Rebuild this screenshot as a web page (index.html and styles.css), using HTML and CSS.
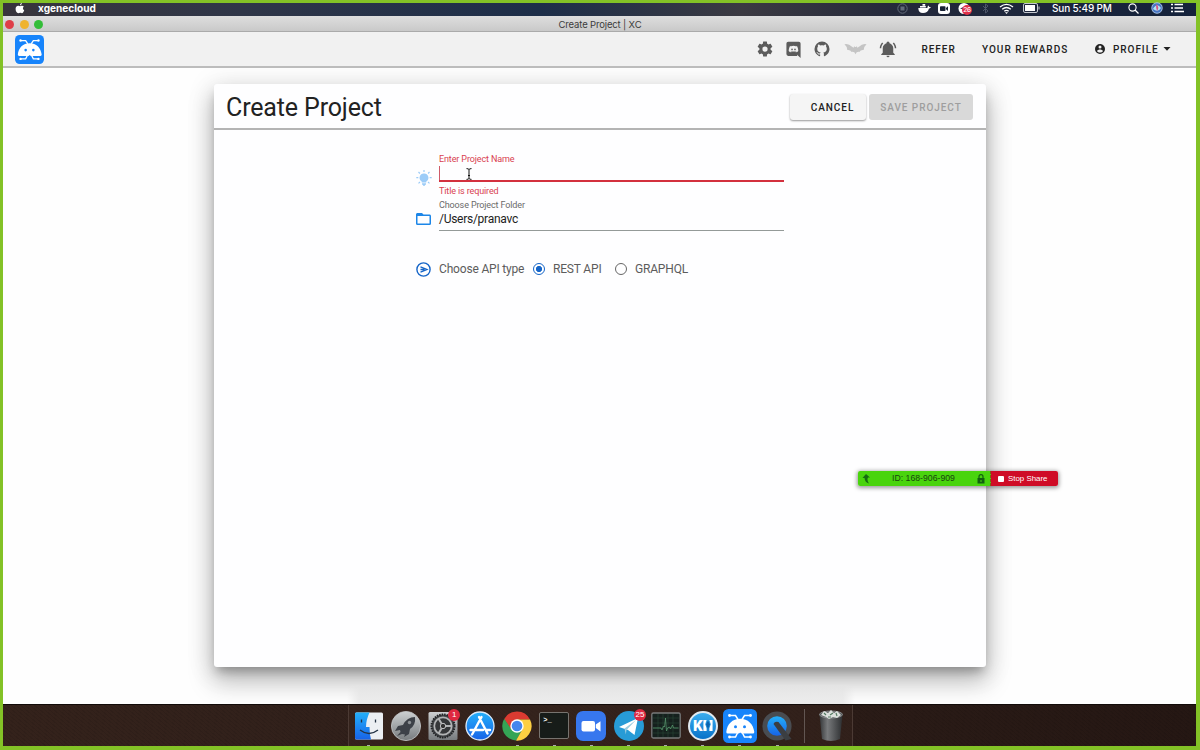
FILE: index.html
```html
<!DOCTYPE html>
<html lang="en">
<head>
<meta charset="utf-8">
<title>Create Project | XC</title>
<link rel="stylesheet" href="styles.css">
</head>
<body>
<svg class="defs" aria-hidden="true">
  <defs>
    <linearGradient id="blue" x2="0" y2="1"><stop stop-color="#24b0fa"/><stop offset="1" stop-color="#1763e8"/></linearGradient>
    <linearGradient id="silver" x2="0" y2="1"><stop stop-color="#cdd0d2"/><stop offset="1" stop-color="#777b7e"/></linearGradient>
    <linearGradient id="metal" x2="1" y2="0"><stop stop-color="#343638"/><stop offset=".35" stop-color="#77797b"/><stop offset="1" stop-color="#2d2f31"/></linearGradient>
    <symbol id="bug" viewBox="0 0 34 34">
      <rect width="34" height="34" rx="5.500" fill="#1784fb"/>
      <g fill="none" stroke="#fff" stroke-width="1.500"><path d="M7 6.500h5.500l2.500 4M27 6.500h-5.500l-2.500 4M6.500 28h6l2-4M27.500 28h-6l-2-4"/></g>
      <g fill="#fff"><circle cx="6.500" cy="6.500" r="1.400"/><circle cx="27.500" cy="6.500" r="1.400"/><circle cx="6.500" cy="28" r="1.400"/><circle cx="27.500" cy="28" r="1.400"/>
      <path d="M3.300 23C4 15 9.500 9.700 17.200 9.700S30.400 15 31.300 23q0 1.500-1.500 1.500H18.500l-1.300-1-1.300 1H4.800q-1.500 0-1.500-1.500z"/></g>
      <circle cx="12.500" cy="17.700" r="1.500" fill="#1784fb"/><circle cx="21.500" cy="17.700" r="1.500" fill="#1784fb"/>
    </symbol>
  </defs>
</svg>
<div class="screen">
  <header class="menubar">
    <svg class="apple" viewBox="0 0 10 11"><path fill="#fff" d="M6.900.1C7 1.200 6.100 2.300 5 2.400 4.900 1.300 5.900.2 6.900.1zM8.800 3.600C7.500 4.600 7.700 6.500 9.200 7.200 8.800 8.700 7.800 10.200 6.900 10.200 6.200 10.200 5.900 9.800 5.100 9.800s-1.100.4-1.800.4C1.700 10.200.4 7.800.6 5.600.8 3.500 2.200 2.600 3.500 2.800c.6.100 1 .4 1.600.4.700 0 1-.4 1.900-.4.700 0 1.400.3 1.800.8z"/></svg>
    <span class="app-name">xgenecloud</span>
    <div class="status">
      <svg class="s-rec" viewBox="0 0 11 11"><circle cx="5.500" cy="5.500" r="4.700" fill="none" stroke="#626b7a"/><rect x="3.500" y="3.500" width="4" height="4" fill="#626b7a"/></svg>
      <svg class="s-docker" viewBox="0 0 13 11"><path fill="#fff" d="M.3 5h8.400c1.200 0 1.100-1 1-1.700l.8-.7.8 1.300 1.700.2-1.400 1.300H11C10 8.800 8 10 5 10 1.700 10 .4 8.200.3 5zM2 2.900h5.800v1.700H2zM4.500 1h2.700v1.700H4.500z"/></svg>
      <svg class="s-zoom" viewBox="0 0 12 11"><rect width="12" height="11" rx="3" fill="#fff"/><rect x="2" y="3.200" width="5.500" height="4.800" rx=".8" fill="#172033"/><path fill="#172033" d="M8 5l2-1.700V8L8 6.300z"/></svg>
      <span class="s-msg"><svg viewBox="0 0 12 11"><circle cx="6" cy="5.500" r="5.500" fill="#fff"/><path d="M2 5.500l7-3-1.500 6-2-2z" fill="#26324a"/></svg><b>26</b></span>
      <svg class="s-bt" viewBox="0 0 7 11"><path d="M1 3l5 5-2.500 2V1L6 3 1 8" fill="none" stroke="#4d5668"/></svg>
      <svg class="s-wifi" viewBox="0 0 15 11"><g fill="none" stroke="#fff" stroke-width="1.400"><path d="M1 4q6.500-5.300 13 0M3.200 6.300q4.300-3.500 8.600 0M5.300 8.300q2.200-1.800 4.400 0"/></g><path fill="#fff" d="M6 9.200h3l-1.500 1.700z"/></svg>
      <svg class="s-batt" viewBox="0 0 17 10"><rect x=".5" y=".5" width="14" height="9" rx="1.500" fill="none" stroke="#c4c8cf"/><rect x="2" y="2" width="10" height="6" fill="#fff"/><path d="M16 3.500v3" stroke="#c4c8cf"/></svg>
      <time class="clock">Sun 5:49 PM</time>
      <svg class="s-search" viewBox="0 0 11 11"><circle cx="4.500" cy="4.500" r="3.600" fill="none" stroke="#fff" stroke-width="1.100"/><path d="M7 7l3.500 3.500" stroke="#fff" stroke-width="1.300"/></svg>
      <svg class="s-siri" viewBox="0 0 12 12"><circle cx="6" cy="6" r="5.700" fill="#a8c5e8"/><circle cx="6" cy="6" r="4.800" fill="#4674c2"/><path d="M2 7q4-7 8-1-3 5-8 1z" fill="#b5e5f4"/><path d="M5 2q4 3 1 7-1-3-1-7z" fill="#d95385"/></svg>
      <svg class="s-list" viewBox="0 0 13 10"><path d="M0 1.500h2M3.500 1.500H12M0 5h2M3.500 5H12M0 8.500h2M3.500 8.500H13" stroke="#fff" stroke-width="1.400"/></svg>
    </div>
  </header>
  <div class="titlebar"><i class="light red"></i><i class="light amber"></i><i class="light green"></i><span>Create Project | XC</span></div>
  <nav class="toolbar">
    <svg class="logo"><use href="#bug"/></svg>
    <div class="tools">
      <svg class="t-cog" viewBox="0 0 24 24"><path d="M12,15.5A3.5,3.5 0 0,1 8.5,12A3.5,3.5 0 0,1 12,8.5A3.5,3.5 0 0,1 15.5,12A3.5,3.5 0 0,1 12,15.5M19.43,12.97C19.47,12.65 19.5,12.33 19.5,12C19.5,11.67 19.47,11.34 19.43,11L21.54,9.37C21.73,9.22 21.78,8.95 21.66,8.73L19.66,5.27C19.54,5.05 19.27,4.96 19.05,5.05L16.56,6.05C16.04,5.66 15.5,5.32 14.87,5.07L14.5,2.42C14.46,2.18 14.25,2 14,2H10C9.75,2 9.54,2.18 9.5,2.42L9.13,5.07C8.5,5.32 7.96,5.66 7.44,6.05L4.95,5.05C4.73,4.96 4.46,5.05 4.34,5.27L2.34,8.73C2.21,8.95 2.27,9.22 2.46,9.37L4.57,11C4.53,11.34 4.5,11.67 4.5,12C4.5,12.33 4.53,12.65 4.57,12.97L2.46,14.63C2.27,14.78 2.21,15.05 2.34,15.27L4.34,18.73C4.46,18.95 4.73,19.03 4.95,18.95L7.44,17.94C7.96,18.34 8.5,18.68 9.13,18.93L9.5,21.58C9.54,21.82 9.75,22 10,22H14C14.25,22 14.46,21.82 14.5,21.58L14.87,18.93C15.5,18.67 16.04,18.34 16.56,17.94L19.05,18.95C19.27,19.03 19.54,18.95 19.66,18.73L21.66,15.27C21.78,15.05 21.73,14.78 21.54,14.63L19.43,12.97Z"/></svg>
      <svg class="t-discord" viewBox="0 0 24 24"><path d="M22,24L16.75,19L17.38,21H4.5A2.5,2.5 0 0,1 2,18.5V3.5A2.5,2.5 0 0,1 4.5,1H19.5A2.5,2.5 0 0,1 22,3.5V24M12,6.8C9.32,6.8 7.44,7.95 7.44,7.95C8.47,7.03 10.27,6.5 10.27,6.5L10.1,6.33C8.41,6.36 6.88,7.53 6.88,7.53C5.16,11.12 5.27,14.22 5.27,14.22C6.67,16.03 8.75,15.9 8.75,15.9L9.46,15C8.21,14.73 7.42,13.62 7.42,13.62C7.42,13.62 9.3,14.9 12,14.9C14.7,14.9 16.58,13.62 16.58,13.62C16.58,13.62 15.79,14.73 14.54,15L15.25,15.9C15.25,15.9 17.33,16.03 18.73,14.22C18.73,14.22 18.84,11.12 17.12,7.53C17.12,7.53 15.59,6.36 13.9,6.33L13.73,6.5C13.73,6.5 15.53,7.03 16.56,7.95C16.56,7.95 14.68,6.8 12,6.8M9.93,10.59C10.58,10.59 11.11,11.16 11.1,11.86C11.1,12.55 10.58,13.13 9.93,13.13C9.29,13.13 8.77,12.55 8.77,11.86C8.77,11.16 9.28,10.59 9.93,10.59M14.1,10.59C14.75,10.59 15.27,11.16 15.27,11.86C15.27,12.55 14.75,13.13 14.1,13.13C13.46,13.13 12.94,12.55 12.94,11.86C12.94,11.16 13.45,10.59 14.1,10.59Z"/></svg>
      <svg class="t-github" viewBox="0 0 24 24"><path d="M12,2A10,10 0 0,0 2,12C2,16.42 4.87,20.17 8.84,21.5C9.34,21.58 9.5,21.27 9.5,21C9.5,20.77 9.5,20.14 9.5,19.31C6.73,19.91 6.14,17.97 6.14,17.97C5.68,16.81 5.03,16.5 5.03,16.5C4.12,15.88 5.1,15.9 5.1,15.9C6.1,15.97 6.63,16.93 6.63,16.93C7.5,18.45 8.97,18 9.54,17.76C9.63,17.11 9.89,16.67 10.17,16.42C7.95,16.17 5.62,15.31 5.62,11.5C5.62,10.39 6,9.5 6.65,8.79C6.55,8.54 6.2,7.5 6.75,6.15C6.75,6.15 7.59,5.88 9.5,7.17C10.29,6.95 11.15,6.84 12,6.84C12.85,6.84 13.71,6.95 14.5,7.17C16.41,5.88 17.25,6.15 17.25,6.15C17.8,7.5 17.45,8.54 17.35,8.79C18,9.5 18.38,10.39 18.38,11.5C18.38,15.32 16.04,16.16 13.81,16.41C14.17,16.72 14.5,17.33 14.5,18.26C14.5,19.6 14.5,20.68 14.5,21C14.5,21.27 14.66,21.59 15.17,21.5C19.14,20.16 22,16.42 22,12A10,10 0 0,0 12,2Z"/></svg>
      <svg class="t-bat" viewBox="0 0 24 12"><path d="M.5 1Q5 0 8 3.500l2 1.300.6-1.800 1 1h.8l1-1 .6 1.800 2-1.300Q19 0 23.500 1 21 3 20.500 7q-3-.5-4.500 2-3-.5-4 2.500-1-3-4-2.500-1.500-2.500-4.500-2Q3 3 .5 1z"/></svg>
      <svg class="t-bell" viewBox="0 0 24 24"><path d="M21,19V20H3V19L5,17V11C5,7.9 7.03,5.17 10,4.29C10,4.19 10,4.1 10,4A2,2 0 0,1 12,2A2,2 0 0,1 14,4C14,4.1 14,4.19 14,4.29C16.97,5.17 19,7.9 19,11V17L21,19M14,21A2,2 0 0,1 12,23A2,2 0 0,1 10,21M19.75,3.19L18.33,4.61C20.04,6.3 21,8.6 21,11H23C23,8.07 21.84,5.25 19.75,3.19M1,11H3C3,8.6 3.96,6.3 5.67,4.61L4.25,3.19C2.16,5.25 1,8.07 1,11Z"/></svg>
      <span class="n-refer">REFER</span>
      <span class="n-rewards">YOUR REWARDS</span>
      <svg class="n-acct" viewBox="2 2 20 20"><path d="M12,19.2C9.5,19.2 7.29,17.92 6,16C6.03,14 10,12.9 12,12.9C14,12.9 17.97,14 18,16C16.71,17.92 14.5,19.2 12,19.2M12,5A3,3 0 0,1 15,8A3,3 0 0,1 12,11A3,3 0 0,1 9,8A3,3 0 0,1 12,5M12,2A10,10 0 0,0 2,12A10,10 0 0,0 12,22A10,10 0 0,0 22,12C22,6.47 17.5,2 12,2Z"/></svg>
      <span class="n-profile">PROFILE</span>
      <svg class="n-arrow" viewBox="0 0 8 4"><path d="M.5 0h7L4 3.700z"/></svg>
    </div>
  </nav>
  <main class="page">
    <section class="card">
      <div class="card-head">
        <h1>Create Project</h1>
        <button class="btn cancel">CANCEL</button>
        <button class="btn save" disabled>SAVE PROJECT</button>
      </div>
      <form class="form">
        <div class="row name-row">
          <svg class="bulb" viewBox="0 0 16 16"><path d="M8 3.500a4.300 4.300 0 0 1 2.300 8v1H5.700v-1A4.300 4.300 0 0 1 8 3.500zM6 13.300h4v1.500H9v1H7v-1H6z"/><path d="M8 0v2M2.500 2l1.400 1.500M13.500 2l-1.400 1.500M.3 7.700h2M13.700 7.700h2M2.500 13.400L4 12M13.500 13.400L12 12" stroke="#9cccf8" stroke-width="1.200"/></svg>
          <div class="field">
            <label class="error">Enter Project Name</label>
            <div class="input invalid"><i class="caret"></i><svg class="ibeam" viewBox="0 0 6 12"><path d="M.5.6q2 0 2.500 1Q3.500.6 5.500.6M3 1.500v9M.5 11.400q2 0 2.500-1 .5 1 2.500 1M2 7.500h2" fill="none" stroke="#111"/></svg></div>
            <div class="hint error">Title is required</div>
          </div>
        </div>
        <div class="row folder-row">
          <svg class="folder" viewBox="2 4 20 16"><path d="M20,18H4V8H20M20,6H12L10,4H4C2.89,4 2,4.89 2,6V18A2,2 0 0,0 4,20H20A2,2 0 0,0 22,18V8C22,6.89 21.1,6 20,6Z"/></svg>
          <div class="field">
            <label>Choose Project Folder</label>
            <div class="input">/Users/pranavc</div>
          </div>
        </div>
        <div class="row api-row">
          <svg class="api" viewBox="0 0 15 15"><circle cx="7.500" cy="7.500" r="6.600" fill="none" stroke="#1565c8" stroke-width="1.400"/><path d="M4.500 4.800l6.500 2.700-6.500 2.700M4.500 7.500h4" fill="none" stroke="#1565c8" stroke-width="1.300"/></svg>
          <span class="api-label">Choose API type</span>
          <i class="radio on"></i><span class="rest">REST API</span>
          <i class="radio"></i><span class="gql">GRAPHQL</span>
        </div>
      </form>
    </section>
    <div class="dock-glow"></div>
  </main>
  <footer class="desktop">
    <div class="dock">
      <div class="cell run"><svg viewBox="0 0 30 30"><rect x="1" y="1.500" width="28" height="27" rx="1.500" fill="#eceff3"/><path d="M2 1.500h13.500Q12 9 12 16h3.500q0 7 1.500 12.500H2.500Q1 28.500 1 27V3q0-1.500 1-1.500z" fill="url(#blue)"/><path d="M7.500 8.500v3M21.500 8.500v3M6 19q9 7 18 0" fill="none" stroke="#243345" stroke-width="1.300"/></svg></div>
      <div class="cell"><svg viewBox="0 0 30 30"><circle cx="15" cy="15" r="14.600" fill="url(#silver)" stroke="#c4c7c9" stroke-width=".8"/><path fill="#3d4148" d="M24 6q-8 0-12 8l-5 1-3 5 5-1 .5 2L6 25l5-2 3 .5L13 26l5-3 1-5q6-4 5-12z"/><circle cx="18.500" cy="11.500" r="1.700" fill="#8d9195"/></svg></div>
      <div class="cell"><svg viewBox="0 0 30 30"><rect x=".5" y="1" width="29" height="28" rx="1.500" fill="url(#silver)"/><circle cx="15" cy="15" r="11.500" fill="#44474a" stroke="#222426" stroke-width="2" stroke-dasharray="1.500 1"/><circle cx="15" cy="15" r="8.700" fill="#353739" stroke="#b2b4b5" stroke-width="1.700"/><path d="M15 15h8.500M15 15l-4.500-7.500M15 15l-4.500 7.500" stroke="#b2b4b5" stroke-width="2"/><circle cx="15" cy="15" r="2.700" fill="#333" stroke="#c0c2c3"/></svg><b class="badge">1</b></div>
      <div class="cell"><svg viewBox="0 0 30 30"><circle cx="15" cy="15" r="14" fill="url(#blue)" stroke="#dceafa" stroke-width="1.300"/><path d="M14 6l8.500 16.500M16.500 6L9 20M5.500 19H18M21.500 19h3.500M8.500 21l-1.500 2.500" fill="none" stroke="#fff" stroke-width="2.400" stroke-linecap="round"/></svg></div>
      <div class="cell run"><svg viewBox="0 0 30 30"><path fill="#db3b31" d="M2.200 8A14.600 14.600 0 0 1 28 8.500H15L8.700 18.500z"/><path fill="#34a455" d="M2.200 7.700A14.600 14.600 0 0 0 14 29.600L20.500 18.500 9.300 18.200z"/><path fill="#fdcf42" d="M28 8.500A14.600 14.600 0 0 1 14 29.600l6.600-11.500L15 8.500z"/><circle cx="15" cy="15" r="6.700" fill="#fff"/><circle cx="15" cy="15" r="5.300" fill="#4486ee"/></svg></div>
      <div class="cell run"><span class="term">&gt;_</span></div>
      <div class="cell run"><svg viewBox="0 0 30 30"><rect width="30" height="30" rx="7" fill="#3777ee"/><rect x="5.500" y="10" width="13.500" height="10.500" rx="2" fill="#fff"/><path fill="#fff" d="M19.800 13.500l4.700-3.300v10.300l-4.700-3.400z"/></svg></div>
      <div class="cell run"><svg viewBox="0 0 30 30"><circle cx="15" cy="15" r="15" fill="#279bd6"/><path fill="#fff" d="M5 16L24 7l-3.500 17-6.500-5z"/><path d="M10.500 17.500L22 9l-9.500 10-.7 4.500z" fill="#9dccdf"/></svg><b class="badge">25</b></div>
      <div class="cell run"><svg viewBox="0 0 30 30"><rect x=".8" y="2" width="28.400" height="25" rx="1.500" fill="#15201d" stroke="#77797a" stroke-width="1.300"/><path d="M2 7h26M2 12h26M2 17h26M2 22h26M7 3v23M12 3v23M17 3v23M22 3v23" stroke="#294637" stroke-width=".6"/><path d="M2 17h8l1 2 1.500-4 1 1 1-9 1 13 1-3 2-1 1 2 2-4 1 3h5" fill="none" stroke="#5c9f73" stroke-width=".7"/></svg></div>
      <div class="cell run"><span class="k1">K<svg viewBox="0 0 10 12"><path fill="#fff" d="M0 0h3.500L2 4.500 3.500 9v3H0zM6.500 0H10v12H6.500V9L8 4.500z"/><path fill="#0d62ae" d="M5 .5l2 4L5 10 3 4.500z"/></svg></span></div>
      <div class="cell run"><svg class="big"><use href="#bug"/></svg></div>
      <div class="cell run"><svg viewBox="0 0 30 30"><circle cx="15" cy="15" r="14.600" fill="#494c51"/><circle cx="15" cy="15" r="9.800" fill="url(#blue)"/><path d="M11.500 13q1-3 5-2l13 17-6 1.500z" fill="#3b3e42"/></svg></div>
      <i class="sep"></i>
      <div class="cell trash"><svg viewBox="0 0 26 32"><path d="M1.500 4.500h23L22 29q-9 4-18 0z" fill="url(#metal)"/><ellipse cx="13" cy="4.500" rx="11.500" ry="3.500" fill="#55595a" stroke="#8a8d8e"/><path d="M3 5l3-4 4 2 3-3 3 3 3-2 4 4-4 3-4-1-4 2-3-2z" fill="#dce0dc"/><path d="M6 3l2 2M12 5l3-2M18 3l1 3M10 7h3" stroke="#547b62" stroke-width="1.200"/></svg></div>
    </div>
  </footer>
</div>
<div class="share"><span class="share-id"><svg viewBox="0 0 8 10"><path d="M4 0l4 3.500H6q-1.500 2 1 6-4-1-4.500-5.500H.5z" fill="#166b12"/></svg><em>ID: 168-906-909</em><svg viewBox="0 0 8 10"><rect x=".5" y="4" width="7" height="5.500" fill="#126010"/><path d="M2 4V2.700q0-2 2-2t2 2V4" fill="none" stroke="#126010" stroke-width="1.200"/><path d="M4 6v2" stroke="#49d40d"/></svg></span><span class="stop"><i></i>Stop Share</span></div>
</body>
</html>
```

FILE: styles.css
```css
* { box-sizing: border-box; }
body { margin: 0; width: 1200px; height: 750px; overflow: hidden; font-family: Roboto, sans-serif; color: #222; }
svg { display: block; flex: none; }
i, em { font-style: normal; flex: none; }
.defs { position: absolute; width: 0; height: 0; }
.screen { width: 1200px; height: 750px; border: solid #83c226; border-width: 3px 4px 4px 3px; display: flex; flex-direction: column; }

.menubar { height: 13px; display: flex; align-items: center; background: linear-gradient(90deg, #38353c, #2f3648 20%, #1d2e49 45%, #3b3a42 62%, #24293b 75%, #14223b); color: #fff; font: 500 10.5px/10px Inter, sans-serif; white-space: nowrap; padding-bottom: 3px; }
.apple { width: 10px; height: 11px; margin-left: 12px; }
.app-name { margin-left: 13px; font-weight: 700; font-size: 10.1px; }
.status { margin-left: auto; width: 303px; display: flex; align-items: center; }
.s-rec { width: 11px; height: 11px; margin-left: 4px; }
.s-docker { width: 13px; height: 11px; margin-left: 10px; }
.s-zoom { width: 12px; height: 11px; margin-left: 7px; }
.s-msg { position: relative; width: 12px; height: 11px; margin-left: 8px; }
.s-msg svg { width: 12px; height: 11px; }
.s-msg b { position: absolute; left: 4px; top: 2px; width: 10px; height: 10px; border-radius: 5px; background: #e03048; font: 500 6.500px/10px Inter, sans-serif; letter-spacing: -.3px; text-align: center; }
.s-bt { width: 7px; height: 11px; margin-left: 12px; }
.s-wifi { width: 15px; height: 11px; margin-left: 10px; }
.s-batt { width: 17px; height: 10px; margin-left: 9px; }
.clock { margin-left: 12px; width: 62px; font-size: 10px; letter-spacing: -.15px; }
.s-search { width: 11px; height: 11px; margin-left: 14px; }
.s-siri { width: 12px; height: 12px; margin-left: 12px; }
.s-list { width: 13px; height: 10px; margin-left: 8px; }

.titlebar { position: relative; height: 16px; display: flex; align-items: center; background: linear-gradient(#dedede, #c9c9c9); border-bottom: 1px solid #aaa; padding-top: 1px; }
.light { width: 9px; height: 9px; border-radius: 50%; margin-left: 2px; margin-right: 3.500px; }
.light.red { background: #df3e48; }
.light.amber { background: #efb32e; }
.light.green { background: #33bd38; }
.titlebar span { position: absolute; left: 0; right: 0; top: 2px; text-align: center; font: 400 9.5px/14px Inter, sans-serif; color: #3c3c3c; letter-spacing: -.15px; padding-left: 1px; }

.toolbar { height: 36px; flex: none; display: flex; align-items: center; background: #f1f1f1; border-bottom: 2px solid #bcbcbc; }
.logo { width: 29px; height: 29px; margin-left: 12px; }
.tools { margin-left: auto; width: 440px; display: flex; align-items: center; fill: #5c5c5c; font-weight: 500; font-size: 10px; letter-spacing: .95px; white-space: nowrap; }
.t-cog, .t-github { width: 18px; height: 18px; }
.t-discord { width: 17px; height: 17px; margin-left: 11px; }
.t-github { margin-left: 11px; }
.t-bat { width: 23px; height: 12px; margin-left: 12.500px; fill: #c4c4c4; }
.t-bell { width: 18px; height: 18px; margin-left: 12.500px; }
.n-refer { width: 33px; margin-left: 24.500px; }
.n-rewards { width: 86px; margin-left: 27.500px; letter-spacing: 1px; }
.n-acct { width: 10px; height: 10px; margin-left: 27px; fill: #222; }
.n-profile { width: 46px; margin-left: 8px; }
.n-arrow { width: 8px; height: 4px; margin-left: 4px; fill: #222; }

.page { position: relative; flex: 1; background: #fefefe; overflow: hidden; }
.card { width: 772px; height: 583px; margin: 15.500px 0 0 211px; border-radius: 3px; background: #fefeff; box-shadow: 0 7px 10px -3px rgba(0,0,0,.28), 0 14px 24px 2px rgba(0,0,0,.22), 0 3px 28px 2px rgba(0,0,0,.1); }
.card-head { height: 46px; display: flex; align-items: center; border-bottom: 2px solid #b4b4b4; padding: 2px 13px 0 12px; }
h1 { margin: 2px auto 0 0; font-size: 25px; font-weight: 400; line-height: 30px; letter-spacing: -.14px; }
.btn { height: 26px; border: 0; border-radius: 3px; padding: 1px 0 0; font: 500 10px/25px Roboto, sans-serif; letter-spacing: .95px; }
.cancel { width: 76px; padding-left: 9px; background: #f5f5f5; color: #222; box-shadow: 0 1px 2px rgba(0,0,0,.4); }
.save { width: 104px; margin-left: 3px; background: #d9d9d9; color: #9e9e9e; }

.form { padding: 23px 0 0 202px; }
.row { display: flex; }
.field { width: 345px; margin-left: 8px; }
label, .hint { display: block; font-size: 9px; line-height: 12px; letter-spacing: -.12px; color: #6a6a6a; }
label.error, .hint.error { color: #d9414f; }
.input { height: 19px; font-size: 12px; line-height: 17px; border-bottom: 1px solid #949a98; letter-spacing: -.27px; }
.invalid { height: 17px; border-bottom: 2px solid #d3303e; display: flex; align-items: center; }
.hint { margin-top: 3px; }
.caret { width: 1px; height: 14px; margin-top: 1px; background: #cf5a68; }
.ibeam { width: 6px; height: 12px; margin-left: 26px; margin-top: 3px; }
.bulb { width: 16px; height: 16px; margin-top: 17px; fill: #9cccf8; margin-right: -1px; }
.name-row { height: 46px; }
.folder { width: 15px; height: 12px; margin-top: 14.500px; fill: #1c86e8; }
.folder-row { height: 33px; }
.folder-row .input { height: 20.500px; }
.api-row { align-items: center; height: 16px; margin-top: 29.500px; font-size: 12px; color: #5c5c5c; letter-spacing: -.18px; white-space: nowrap; }
.api { width: 15px; height: 15px; }
.api-label { width: 87px; margin-left: 8px; }
.radio { width: 12px; height: 12px; border: 1.500px solid #666; border-radius: 50%; }
.radio.on { margin-left: 7px; border-color: #1565c8; background: radial-gradient(circle, #1565c8 0 2.800px, #fff 3.300px); }
.rest { width: 49px; margin-left: 8px; }
.rest + .radio { margin-left: 13px; }
.gql { margin-left: 8px; }
.dock-glow { position: absolute; left: 344px; top: 617px; width: 508px; height: 20px; background: linear-gradient(90deg, transparent, rgba(228,228,228,.7) 12px, rgba(228,228,228,.7) calc(100% - 12px), transparent); }

.desktop { height: 42px; flex: none; background: repeating-linear-gradient(40deg, rgba(0,0,0,.08) 0 1px, transparent 1px 3px), linear-gradient(90deg, #34221b, #30201b 40%, #251713); border-top: 1px solid #120b09; }
.dock { width: 505px; height: 41px; margin-left: 345px; padding-left: 1px; display: flex; background: rgba(64,42,34,.35); border: solid #4b3a34; border-width: 0 1px; }
.cell { position: relative; width: 37.15px; height: 41px; display: flex; align-items: center; justify-content: center; flex: none; }
.cell > svg { width: 30px; height: 30px; }
.cell > .big { width: 34px; height: 34px; }
.run::after { content: ""; position: absolute; bottom: 0; left: 17px; width: 3px; height: 1px; background: #aaa; }
.badge { position: absolute; left: 24px; top: 4px; width: 12px; height: 12px; border-radius: 50%; background: #df2940; color: #fff; font: 400 8px/12px "Liberation Sans", sans-serif; text-align: center; }
.term { width: 30px; height: 27px; border: 1px solid #77736f; border-radius: 2px; background: #171c19; color: #fff; font: 700 7px/10px "Liberation Mono", monospace; padding: 2px 3px; }
.k1 { width: 30px; height: 30px; border-radius: 50%; border: 2px solid #e2eaf0; background: linear-gradient(#3badef, #0872c9); color: #fff; font: 900 15px/26px Roboto, sans-serif; display: flex; align-items: center; justify-content: center; }
.k1 svg { width: 10px; height: 11px; }
.sep { width: 1px; height: 34px; margin: 4px 8px 0 8px; background: #625652; }
.trash > svg { width: 26px; height: 32px; }

.share { position: absolute; left: 858px; top: 471px; width: 200px; height: 15px; display: flex; border-radius: 2px; box-shadow: 0 1px 4px 1px rgba(0,0,0,.4); font: 8.700px/15px "Liberation Sans", sans-serif; white-space: nowrap; }
.share-id { width: 133px; background: #49d40d; color: #17450f; display: flex; align-items: center; justify-content: space-between; padding: 0 5px 0 4px; border-right: 1px dashed #7b6212; border-radius: 2px 0 0 2px; }
.share-id svg { width: 8px; height: 10px; }
.stop { width: 67px; background: #cf0c26; color: #fff; display: flex; align-items: center; padding-left: 7px; gap: 4px; font-size: 7.900px; border-radius: 0 2px 2px 0; }
.stop i { width: 6px; height: 6px; background: #fff; border-radius: 1px; }
```
